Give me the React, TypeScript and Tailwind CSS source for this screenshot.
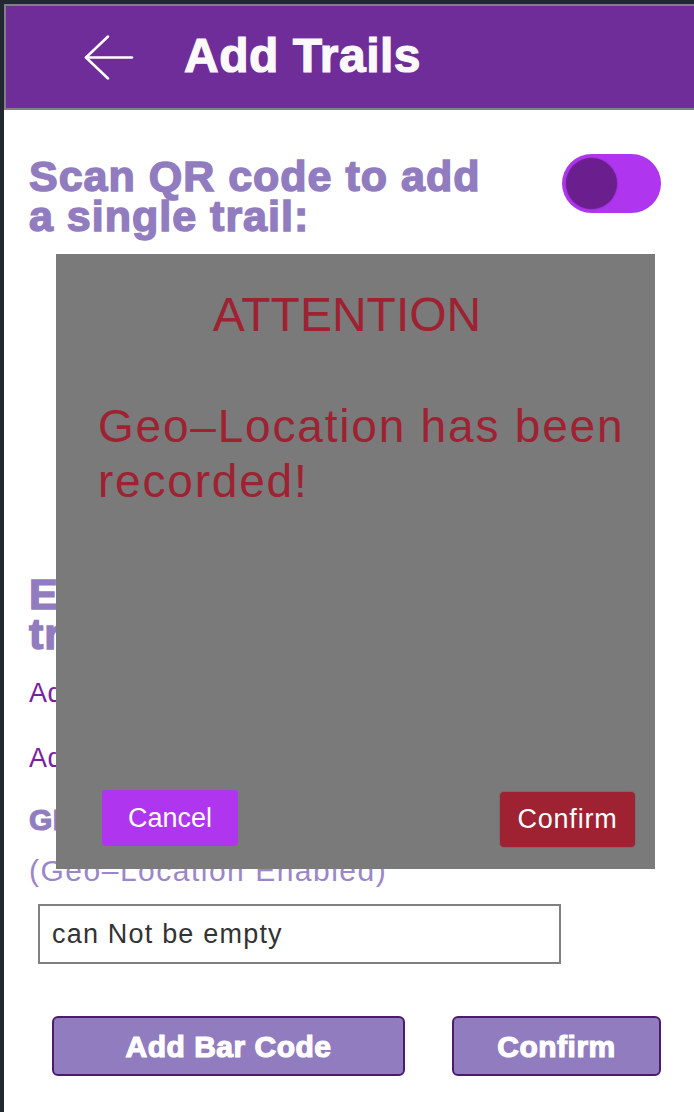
import { useState } from 'react';

// Add Trails screen with the geo-location confirmation dialog open
export default function App() {
  const [scanEnabled, setScanEnabled] = useState(true);
  const [barCode, setBarCode] = useState('can Not be empty');
  const [showDialog, setShowDialog] = useState(true);

  return (
    <div className="min-h-screen bg-[#222831] pt-[4px] pl-[4px] font-['Liberation_Sans',Arial,sans-serif]">
      <div className="relative h-[1108px] overflow-hidden bg-white">
        {/* Header */}
        <div className="flex h-[106px] items-center border-2 border-r-0 border-[#808080] bg-[#6f2d9a] pl-[78px]">
          <button className="flex h-[44px] w-[50px] items-center" aria-label="Back">
            <svg width="50" height="45" viewBox="0 0 50 45" fill="none" stroke="white" strokeWidth={2.5} strokeLinecap="round" strokeLinejoin="round">
              <path d="M2 22.5H48" />
              <path d="M24 1.5L2 22.5L24 43.5" />
            </svg>
          </button>
          <h1 className="ml-[50px] pb-[2px] text-[48px] leading-none font-bold tracking-[0.5px] text-[#fbf9f9] [-webkit-text-stroke:1.2px_#fbf9f9]">
            Add Trails
          </h1>
        </div>

        <div className="px-[25px]">
          {/* QR scan toggle */}
          <div className="mt-[44px] flex items-start justify-between pr-[8px]">
            <h2 className="mt-[2px] w-[470px] text-[43px] leading-[40px] font-bold tracking-[1px] text-[#927cc0] [-webkit-text-stroke:1.5px_#927cc0]">
              Scan QR code to add a single trail:
            </h2>
            <button
              onClick={() => setScanEnabled(!scanEnabled)}
              className="flex h-[59px] w-[99px] items-center rounded-full bg-[#b035ee] px-[4px]"
              aria-label="Toggle QR scan"
            >
              <span className={`h-[51px] w-[51px] rounded-full bg-[#6b1f8f] shadow-[0_0_2px_rgba(0,0,0,0.35)] ${scanEnabled ? '' : 'ml-auto'}`} />
            </button>
          </div>

          {/* Camera area */}
          <div className="h-[338px]" />

          <h2 className="w-[470px] text-[43px] leading-[40px] font-bold tracking-[1px] text-[#927cc0] [-webkit-text-stroke:1.5px_#927cc0]">
            Enter bar code to add trails:
          </h2>
          <p className="mt-[23px] text-[27px] leading-[32px] tracking-[0.5px] text-[#7b1fa2]">Add trail name</p>
          <p className="mt-[33px] text-[27px] leading-[32px] tracking-[0.5px] text-[#7b1fa2]">Add trail location</p>
          <h3 className="mt-[28px] text-[30px] leading-[36px] font-bold tracking-[0.5px] text-[#927cc0] [-webkit-text-stroke:1.2px_#927cc0]">
            GPS Location:
          </h3>
          <p className="mt-[16px] text-[30px] leading-[34px] tracking-[1.5px] text-[#9b86c9]">(Geo–Location Enabled)</p>

          <input
            value={barCode}
            onChange={(e) => setBarCode(e.target.value)}
            className="mt-[16px] ml-[9px] h-[60px] w-[523px] border-2 border-[#808080] bg-white px-[12px] text-[27px] tracking-[1.2px] text-[#333333] outline-none"
          />

          <div className="mt-[52px] flex pl-[23px]">
            <button className="h-[60px] w-[353px] rounded-[6px] border-2 border-[#4b1c6b] bg-[#927cc0] text-[30px] font-bold tracking-[0.5px] text-white [-webkit-text-stroke:1.2px_white]">
              Add Bar Code
            </button>
            <button className="ml-[47px] h-[60px] w-[209px] rounded-[6px] border-2 border-[#4b1c6b] bg-[#927cc0] text-[30px] font-bold tracking-[0.5px] text-white [-webkit-text-stroke:1.2px_white]">
              Confirm
            </button>
          </div>
        </div>

        {/* Attention dialog */}
        {showDialog && (
          <div className="absolute top-[250px] left-[52px] flex h-[615px] w-[599px] flex-col bg-[#7a7a7a]">
            <h2 className="mt-[33px] pr-[17px] text-center text-[48px] leading-[56px] text-[#9e2232]">ATTENTION</h2>
            <p className="mt-[56px] pr-[10px] pl-[42px] text-[46px] leading-[55px] tracking-[1.8px] text-[#9e2232]">
              Geo–Location has been recorded!
            </p>
            <div className="mt-auto flex items-end justify-between pr-[20px] pb-[22px] pl-[46px]">
              <button
                onClick={() => setShowDialog(false)}
                className="mb-[1px] h-[56px] w-[136px] rounded-[4px] bg-[#b035ee] text-[27px] text-white"
              >
                Cancel
              </button>
              <button
                onClick={() => setShowDialog(false)}
                className="h-[55px] w-[135px] rounded-[4px] bg-[#9e2232] text-[27px] tracking-[0.8px] text-white shadow-[0_0_0_1px_rgba(0,0,0,0.08)]"
              >
                Confirm
              </button>
            </div>
          </div>
        )}
      </div>
    </div>
  );
}
